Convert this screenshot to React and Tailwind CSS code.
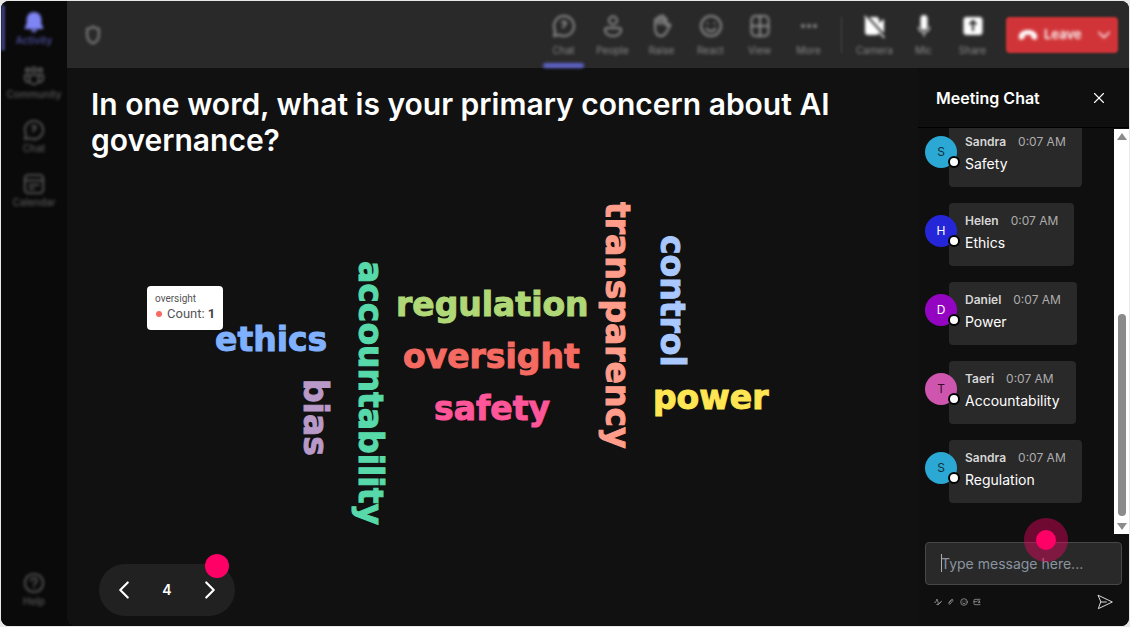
import React from "react";
import { X, ChevronLeft, ChevronRight, ChevronDown } from "lucide-react";

const stroke = {
  viewBox: "0 0 24 24",
  fill: "none",
  stroke: "currentColor",
  strokeWidth: 2,
  strokeLinecap: "round",
  strokeLinejoin: "round",
  "aria-hidden": true,
};

const Bell = ({ className }) => (
  <svg viewBox="0 0 24 24" fill="currentColor" aria-hidden="true" className={className}>
    <path d="M12 1a8 8 0 0 0-8 8v5l-2 4a1 1 0 0 0 1 1.500h18a1 1 0 0 0 1-1.500l-2-4V9a8 8 0 0 0-8-8Z" />
    <path d="M8.500 20.500a3.600 3.600 0 0 0 7 0Z" />
  </svg>
);
const Community = ({ className }) => (
  <svg {...stroke} className={className}>
    <circle cx="5" cy="5.500" r="2" />
    <circle cx="12" cy="5" r="2.500" />
    <circle cx="19" cy="5.500" r="2" />
    <path d="M7 11h10v5a5 5 0 0 1-10 0ZM7 11H2v4a4 4 0 0 0 5 3.500M17 11h5v4a4 4 0 0 1-5 3.500" />
  </svg>
);
const ChatBubble = ({ className }) => (
  <svg {...stroke} className={className}>
    <path d="M12 2a10 10 0 1 1-4.800 18.800L2 22l1.200-5.200A10 10 0 0 1 12 2Z" />
    <path d="M10 8.500c1-1.500 4.500-1 4 1-.4 1.500-2.500 1.500-3 4" />
  </svg>
);
const Calendar = ({ className }) => (
  <svg {...stroke} className={className}>
    <rect x="2" y="2" width="20" height="20" rx="4" />
    <path d="M2 8h20M7 13h10M7 17h5" />
  </svg>
);
const Help = ({ className }) => (
  <svg {...stroke} className={className}>
    <circle cx="12" cy="12" r="10" />
    <path d="M9 9.500a3 3 0 1 1 4.500 2.600c-1 .6-1.500 1-1.500 2M12 17.200v.1" />
  </svg>
);
const Shield = ({ className }) => (
  <svg {...stroke} strokeWidth="2.500" className={className}>
    <path d="M12 2c2.500 2 4.500 2.500 7 2.500V12c0 5-3 8.500-7 10-4-1.500-7-5-7-10V4.500C7.500 4.500 9.500 4 12 2Z" />
  </svg>
);
const Person = ({ className }) => (
  <svg {...stroke} className={className}>
    <circle cx="12" cy="6.500" r="4" />
    <path d="M6 14h12a2 2 0 0 1 2 2c0 4-4 6-8 6s-8-2-8-6a2 2 0 0 1 2-2Z" />
  </svg>
);
const Hand = ({ className }) => (
  <svg {...stroke} className={className}>
    <path d="M5 13V6.500a1.500 1.500 0 0 1 3 0V4a1.500 1.500 0 0 1 3 0V3a1.500 1.500 0 0 1 3 0v2a1.500 1.500 0 0 1 2.500 0v7l1.500-1.500c1-1 3 0 2 1.500l-3.500 6c-1.500 2.500-3 4-5.500 4-4 0-6-3.500-6-9Z" />
    <path d="M8 6v4M11 4v6M14 5v5" />
  </svg>
);
const Smile = ({ className }) => (
  <svg {...stroke} className={className}>
    <circle cx="12" cy="12" r="10" />
    <path d="M7.500 14.500c2 3.500 7 3.500 9 0M8.500 9.200v.2M15.500 9.200v.2" />
  </svg>
);
const Grid = ({ className }) => (
  <svg {...stroke} className={className}>
    <rect x="3.500" y="2" width="17" height="20" rx="4" />
    <path d="M12 2v20M3.500 12h17" />
  </svg>
);
const Dots = ({ className }) => (
  <svg viewBox="0 0 24 24" fill="currentColor" aria-hidden="true" className={className}>
    <circle cx="6" cy="12" r="2" />
    <circle cx="12" cy="12" r="2" />
    <circle cx="18" cy="12" r="2" />
  </svg>
);
const CameraOff = ({ className }) => (
  <svg viewBox="0 0 24 24" fill="currentColor" aria-hidden="true" className={className}>
    <rect x="2" y="3" width="14" height="18" rx="3" />
    <path d="M16 9l5-4v14l-5-4Z" />
    <path d="M3 1l19 21" stroke="#292929" strokeWidth="2" />
    <path d="M1.500 2l20 22" stroke="currentColor" strokeWidth="1.500" />
  </svg>
);
const Mic = ({ className }) => (
  <svg {...stroke} className={className}>
    <rect x="9.500" y="2" width="5" height="13" rx="2.500" fill="currentColor" />
    <path d="M6.500 13a5.500 5.500 0 0 0 11 0M12 18.500V22" strokeWidth="1.200" />
  </svg>
);
const ShareUp = ({ className }) => (
  <svg viewBox="0 0 24 24" aria-hidden="true" className={className}>
    <rect x="2.500" y="3" width="19" height="18" rx="3" fill="currentColor" />
    <path d="M12 17V7M8.500 10.500 12 7l3.500 3.500" fill="none" stroke="#292929" strokeWidth="2" />
  </svg>
);
const HangUp = ({ className }) => (
  <svg viewBox="0 0 24 24" fill="currentColor" aria-hidden="true" className={className}>
    <path d="M12 6C6 6 1 9 1 14c0 3 1 4 3 3.500l2.500-.7c1-.3 1.500-1 1.500-2V12.500c2-1 6-1 8 0v2.300c0 1 .5 1.700 1.500 2l2.500.7c2 .5 3-.5 3-3.500 0-5-5-8-11-8Z" />
  </svg>
);
const Send = ({ className }) => (
  <svg {...stroke} strokeWidth="1.500" className={className}>
    <path d="M2 2l21 10L2 22l3.500-10ZM5.500 12H14" />
  </svg>
);
const Format = ({ className }) => (
  <svg {...stroke} className={className}>
    <path d="M2 13h3l4-10 4 12M8 20l3-3M12 20l9-10c1-1 2 0 1 1L13 20c-1 1-3 1-2-1" />
  </svg>
);
const Attach = ({ className }) => (
  <svg {...stroke} className={className}>
    <path d="M6 13l7-8c3-3 7 1 4 4l-8 9c-2 2-5 0-3-3l7-8" />
  </svg>
);
const Apps = ({ className }) => (
  <svg {...stroke} className={className}>
    <path d="M21 4H6a3 3 0 0 0-3 3v10a3 3 0 0 0 3 3h15M3 11h8M14 9h7l-5 5h5" />
  </svg>
);

const railItems = [
  { label: "Activity", Icon: Bell, active: true },
  { label: "Community", Icon: Community },
  { label: "Chat", Icon: ChatBubble },
  { label: "Calendar", Icon: Calendar },
];

const meetingItems = [
  { label: "Chat", Icon: ChatBubble, active: true },
  { label: "People", Icon: Person },
  { label: "Raise", Icon: Hand },
  { label: "React", Icon: Smile },
  { label: "View", Icon: Grid },
  { label: "More", Icon: Dots },
];

const deviceItems = [
  { label: "Camera", Icon: CameraOff },
  { label: "Mic", Icon: Mic },
  { label: "Share", Icon: ShareUp },
];

const words = [
  { text: "ethics", place: "left-[148px] top-[164px] text-[#80b1ff]" },
  { text: "regulation", place: "left-[329px] top-[129px] text-[#b0d877]" },
  { text: "oversight", place: "left-[336px] top-[181px] text-[#f56a61]" },
  { text: "safety", place: "left-[367px] top-[233px] text-[#ff5599]" },
  { text: "power", place: "left-[586px] top-[222px] text-[#ffe652]" },
  { text: "bias", place: "left-[230px] top-[221px] text-[#b899c7] [writing-mode:vertical-rl]" },
  { text: "accountability", place: "left-[285px] top-[103px] text-[#57d9a9] [writing-mode:vertical-rl]" },
  { text: "transparency", place: "left-[532px] top-[44px] text-[#ff9d8a] [writing-mode:vertical-rl]" },
  { text: "control", place: "left-[587px] top-[77px] text-[#a8c8ff] [writing-mode:vertical-rl]" },
];

const messages = [
  { name: "Sandra", text: "Safety", avatar: "bg-[#2ba8d4] text-[#10303c]" },
  { name: "Helen", text: "Ethics", avatar: "bg-[#2626d9] text-white" },
  { name: "Daniel", text: "Power", avatar: "bg-[#9405c2] text-white" },
  { name: "Taeri", text: "Accountability", avatar: "bg-[#cf56ae] text-[#3a0d2e]" },
  { name: "Sandra", text: "Regulation", avatar: "bg-[#2ba8d4] text-[#10303c]" },
];

function RailButton({ label, Icon, active }) {
  return (
    <button
      type="button"
      className={`flex w-full flex-col items-center gap-px blur-[1px] ${active ? "text-[#7f85f5]" : "text-[#595959]"}`}
    >
      <Icon className="size-[22px]" />
      <span className={`text-[10px] leading-3 font-medium ${active ? "text-[#5053a5]" : ""}`}>{label}</span>
    </button>
  );
}

function Rail() {
  return (
    <nav aria-label="Apps" className="relative w-[66px] shrink-0 bg-[#0a0a0a]">
      <span className="absolute top-1 left-0 h-[46px] w-1 rounded-full bg-[#3b3d7c] blur-[1px]" />
      <div className="flex h-full flex-col gap-[19px] pt-[10px] pb-[19px] blur-[1px]">
        {railItems.map((item) => (
          <RailButton key={item.label} {...item} />
        ))}
        <div className="mt-auto">
          <RailButton label="Help" Icon={Help} />
        </div>
      </div>
    </nav>
  );
}

function BarButton({ label, Icon, active, bright }) {
  return (
    <button
      type="button"
      className="relative flex h-full w-[49px] flex-col items-center gap-1 pt-[13px] text-[#8c8c8c] blur-[1px]"
    >
      <Icon className={`size-6 ${bright ? "text-white" : ""}`} />
      <span className="text-[10px] leading-4">{label}</span>
      {active && <span className="absolute inset-x-1 bottom-0 h-[5px] rounded-sm bg-[#5f63c9]" />}
    </button>
  );
}

function MeetingBar() {
  return (
    <header className="h-[67px] shrink-0 bg-[#292929]">
      <div className="flex h-full items-center pr-[11px] pl-4 blur-[1px]">
        <Shield className="mr-auto size-5 text-[#808080] blur-[1px]" />
        {meetingItems.map((item) => (
          <BarButton key={item.label} {...item} />
        ))}
        <span className="mx-2 h-9 w-px bg-[#484848]" />
        {deviceItems.map((item) => (
          <BarButton key={item.label} {...item} bright />
        ))}
        <div className="ml-[9px] flex h-9 w-28 items-center rounded-sm bg-[#d13438] text-white">
          <button
            type="button"
            className="flex h-full flex-1 items-center gap-[6px] pl-3 text-[13px] font-semibold blur-[1px]"
          >
            <HangUp className="size-5" />
            Leave
          </button>
          <button type="button" aria-label="Leave options" className="flex h-full w-6 items-center blur-[1px]">
            <ChevronDown className="size-5" />
          </button>
        </div>
      </div>
    </header>
  );
}

function WordCloud() {
  return (
    <div className="relative min-h-0 flex-1">
      {words.map((w) => (
        <span
          key={w.text}
          className={`absolute font-['DejaVu_Sans',sans-serif] text-[33px] leading-9 font-bold whitespace-nowrap [-webkit-text-stroke:1px_currentColor] ${w.place}`}
        >
          {w.text}
        </span>
      ))}
      <div
        role="tooltip"
        className="absolute top-[128px] left-[80px] rounded-sm bg-white px-2 pt-[5px] pb-[9px] font-[Roboto,sans-serif] whitespace-nowrap text-[#555]"
      >
        <p className="text-[10px] leading-[15px]">oversight</p>
        <p className="flex items-center text-[13px] leading-[15px]">
          <span className="mr-[5px] ml-px size-[6px] rounded-full bg-[#f56a61]" />
          Count:&nbsp;<b className="text-[#444]">1</b>
        </p>
      </div>
    </div>
  );
}

function Question() {
  return (
    <main className="flex min-w-0 flex-1 flex-col rounded-bl-lg bg-[#111] pb-[10px]">
      <h1 className="px-6 pt-[18px] text-[30px] leading-9 font-semibold">
        In one word, what is your primary concern about AI governance?
      </h1>
      <WordCloud />
      <div className="relative ml-8 flex h-[52px] w-[136px] items-center justify-between rounded-full bg-[#212121] px-[10px]">
        <button type="button" aria-label="Previous question">
          <ChevronLeft className="size-[30px]" strokeWidth={1.75} />
        </button>
        <span className="text-sm font-semibold">4</span>
        <button type="button" aria-label="Next question">
          <ChevronRight className="size-[30px]" strokeWidth={1.75} />
        </button>
        <span className="absolute -top-[10px] right-[6px] size-6 rounded-full bg-[#ff0066]" />
      </div>
    </main>
  );
}

function Message({ name, text, avatar }) {
  return (
    <li className="flex shrink-0 items-start">
      <div className={`relative z-10 mt-3 -mr-2 flex size-8 items-center justify-center rounded-full text-xs ${avatar}`}>
        {name[0]}
        <span className="absolute -right-[3px] bottom-0 size-3 rounded-full border-2 border-black bg-white" />
      </div>
      <div className="h-[63px] rounded-sm bg-[#292929] px-4 pt-[10px]">
        <p className="flex gap-3 text-xs leading-4">
          <b className="font-semibold text-[#d6d6d6]">{name}</b>
          <time className="text-[#adadad]">0:07 AM</time>
        </p>
        <p className="mt-1 text-sm leading-5">{text}</p>
      </div>
    </li>
  );
}

function ChatPanel() {
  return (
    <aside aria-label="Meeting Chat" className="flex w-[211px] shrink-0 flex-col bg-[#0f0f0f]">
      <div className="flex h-[60px] shrink-0 items-center justify-between border-b border-black pr-[21px] pl-[18px]">
        <h2 className="text-base font-semibold">Meeting Chat</h2>
        <button type="button" aria-label="Close chat">
          <X className="size-[18px]" strokeWidth={1.5} />
        </button>
      </div>
      <div className="flex min-h-0 flex-1">
        <ul className="flex min-w-0 flex-1 flex-col justify-end gap-4 overflow-hidden pb-[31px] pl-[7px]">
          {messages.map((m) => (
            <Message key={m.text} {...m} />
          ))}
        </ul>
        <div aria-hidden="true" className="mt-px flex w-[15px] flex-col items-center justify-between bg-white py-1">
          <span className="border-x-[5px] border-b-[7px] border-x-transparent border-b-[#8b8b8b]" />
          <span className="mt-auto mb-[7px] h-[51%] w-2 rounded-full bg-[#8b8b8b]" />
          <span className="border-x-[5px] border-t-[7px] border-x-transparent border-t-[#8b8b8b]" />
        </div>
      </div>
      <div className="shrink-0 px-[7px] pt-2 pb-4">
        <div className="relative">
          <input
            type="text"
            aria-label="Type message here"
            placeholder="Type message here..."
            className="h-[43px] w-full rounded-sm border border-[#474747] bg-[#292929] px-[15px] text-sm placeholder:text-[#8a94a0]"
          />
          <span className="absolute top-3 left-4 h-[18px] w-px bg-[#adadad]" />
          <span className="absolute -top-6 right-[54px] flex size-11 items-center justify-center rounded-full bg-[#ff0066]/40">
            <span className="size-5 rounded-full bg-[#ff0066]" />
          </span>
        </div>
        <div className="mt-[9px] flex items-center gap-[5px] pr-[9px] pl-[9px] text-[#b0b0b0]">
          <button type="button" aria-label="Format">
            <Format className="size-2" />
          </button>
          <button type="button" aria-label="Attach">
            <Attach className="size-2" />
          </button>
          <button type="button" aria-label="Emoji">
            <Smile className="size-2" />
          </button>
          <button type="button" aria-label="Apps">
            <Apps className="size-2" />
          </button>
          <button type="button" aria-label="Send" className="ml-auto">
            <Send className="size-4 text-[#dcdcdc]" />
          </button>
        </div>
      </div>
    </aside>
  );
}

export default function App() {
  return (
    <div className="flex h-screen bg-[#e8e8e8] p-px font-[Inter,sans-serif] text-white">
      <div className="flex min-w-0 flex-1 overflow-hidden rounded-lg bg-[#0a0a0a]">
        <Rail />
        <div className="flex min-w-0 flex-1 flex-col">
          <MeetingBar />
          <div className="flex min-h-0 flex-1">
            <Question />
            <ChatPanel />
          </div>
        </div>
      </div>
    </div>
  );
}
